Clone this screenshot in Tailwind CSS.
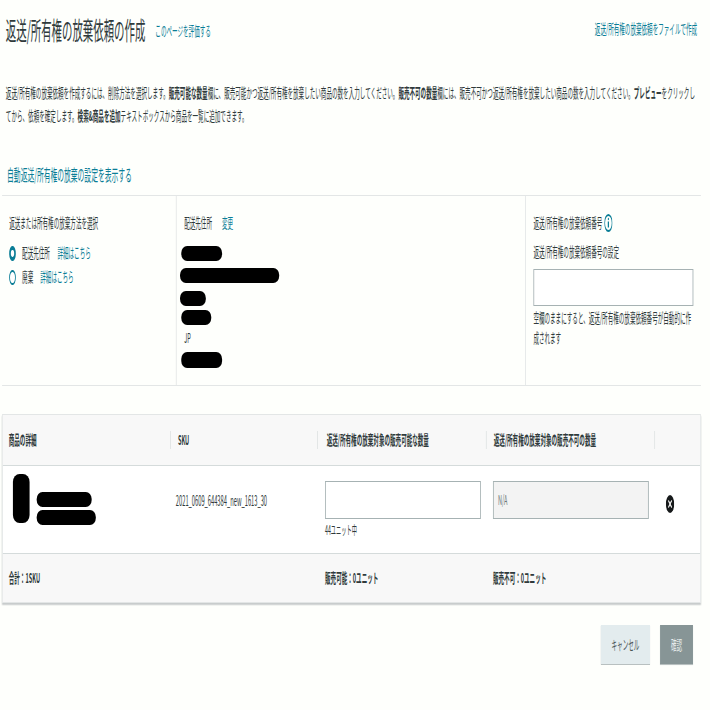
<!DOCTYPE html>
<html lang="ja">
<head>
<meta charset="utf-8">
<title>返送/所有権の放棄依頼の作成</title>
<script src="https://cdn.jsdelivr.net/npm/@tailwindcss/browser@4"></script>
</head>
<body class="bg-[#fefffc]">
<div class="w-[710px] h-[710px] overflow-hidden">
    <!-- the whole page is squeezed horizontally in the reference -->
    <div class="w-[1704px] h-[710px] origin-top-left scale-x-[0.4167] text-[13.35px] leading-[20px] text-[#2f3a3b] font-['Noto_Sans_CJK_JP','Noto_Sans',sans-serif]">

        <div class="flex items-center h-[58px] pl-[14px] pr-[31px]">
            <h1 class="text-[25px] leading-[30px] font-normal">返送/所有権の放棄依頼の作成</h1>
            <a class="ml-[24px] mt-[4px] text-[#0a7d96]">このページを評価する</a>
            <a class="ml-auto text-[#0a7d96]">返送/所有権の放棄依頼をファイルで作成</a>
        </div>

        <p class="mt-[23px] pl-[14px] pr-[20px] leading-[23px]">
            返送/所有権の放棄依頼を作成するには、削除方法を選択します。<b>販売可能な数量</b>欄に、販売可能かつ返送/所有権を放棄したい商品の数を入力してください。<b>販売不可の数量</b>欄には、販売不可かつ返送/所有権を放棄したい商品の数を入力してください。<b>プレビュー</b>をクリックし<br>てから、依頼を確定します。<b>検索&amp;商品を追加</b>テキストボックスから商品を一覧に追加できます。
        </p>

        <a class="block mt-[35px] pl-[17px] text-[16.3px] leading-[24px] text-[#0a7d96]">自動返送/所有権の放棄の設定を表示する</a>

        <section class="ml-[5px] mt-[9px] w-[1677px] h-[191px] grid grid-cols-[417px_840px_420px] border-y border-[#e3e6e6]">
            <div class="pl-[17px] pt-[17px]">
                <div>返送または所有権の放棄方法を選択</div>
                <div class="flex items-center mt-[10px] h-[20px]">
                    <span class="w-[16px] h-[15px] rounded-full border-[4px] border-[#0a7d96] bg-white"></span>
                    <span class="ml-[15px]">配送先住所</span>
                    <a class="ml-[18px] text-[#0a7d96]">詳細はこちら</a>
                </div>
                <div class="flex items-center mt-[4px] h-[20px]">
                    <span class="w-[16px] h-[15px] rounded-full border-2 border-[#0a7d96] bg-white"></span>
                    <span class="ml-[15px]">廃棄</span>
                    <a class="ml-[17px] text-[#0a7d96]">詳細はこちら</a>
                </div>
            </div>

            <div class="border-x-2 border-[#e3e6e6] pl-[18px] pt-[17px]">
                <div class="flex">
                    <span>配送先住所</span>
                    <a class="ml-[24px] text-[#0a7d96]">変更</a>
                </div>
                <div class="mt-[13px] -ml-[7px] w-[98px] h-[15px] bg-black rounded-[14px/7px]"></div>
                <div class="mt-[7px] -ml-[10px] w-[238px] h-[15px] bg-black rounded-[14px/7px]"></div>
                <div class="mt-[8px] -ml-[10px] w-[62px] h-[15px] bg-black rounded-[14px/7px]"></div>
                <div class="mt-[4px] -ml-[7px] w-[72px] h-[15px] bg-black rounded-[14px/7px]"></div>
                <div class="mt-[3px] h-[20px]">JP</div>
                <div class="mt-[4px] -ml-[7px] w-[98px] h-[16px] bg-black rounded-[14px/7px]"></div>
            </div>

            <div class="pl-[18px] pt-[17px]">
                <div class="flex items-center">
                    <span>返送/所有権の放棄依頼番号</span>
                    <svg class="ml-[5px] w-[20px] h-[18px]" viewBox="0 0 20 18" fill="none">
                        <ellipse cx="10" cy="9" rx="9" ry="8" stroke="#0a7d96" stroke-width="2"/>
                        <circle cx="10" cy="5" r="1.3" fill="#0a7d96"/>
                        <rect x="8.5" y="7.5" width="3" height="6" fill="#0a7d96"/>
                    </svg>
                </div>
                <div class="mt-[9px]">返送/所有権の放棄依頼番号の設定</div>
                <input class="block mt-[7px] w-[384px] h-[37px] bg-white border border-x-2 border-[#a6b2b3]" type="text">
                <p class="mt-[2px] w-[386px]">空欄のままにすると、返送/所有権の放棄依頼番号が自動的に作成されます</p>
            </div>
        </section>

        <section class="ml-[5px] mt-[28px] w-[1677px] bg-white border border-x-2 border-[#e3e6e6] shadow-[0_2px_2px_#c8cccc]">
            <div class="grid grid-cols-[401px_353px_405px_404px_1fr] items-center h-[51px] bg-[#f8f8f8] border-b border-[#d5dbdb] font-bold">
                <div class="pl-[14px]">商品の詳細</div>
                <div class="pl-[17px] h-[18px] flex items-center border-l-2 border-[#dfe3e3]">SKU</div>
                <div class="pl-[21px] h-[18px] flex items-center border-l-2 border-[#dfe3e3]">返送/所有権の放棄対象の販売可能な数量</div>
                <div class="pl-[17px] h-[18px] flex items-center border-l-2 border-[#dfe3e3]">返送/所有権の放棄対象の販売不可の数量</div>
                <div class="h-[18px] border-l-2 border-[#dfe3e3]"></div>
            </div>

            <div class="grid grid-cols-[401px_353px_405px_404px_1fr] h-[88px] border-b border-[#d5dbdb]">
                <div class="flex pl-[24px] pt-[8px]">
                    <div class="w-[40px] h-[49px] bg-black rounded-[16px/8px]"></div>
                    <div class="ml-[17px] pt-[18px]">
                        <div class="w-[132px] h-[15px] bg-black rounded-[14px/7px]"></div>
                        <div class="mt-[3px] w-[142px] h-[15px] bg-black rounded-[14px/7px]"></div>
                    </div>
                </div>
                <div class="pl-[14px] pt-[24px] text-[13.8px]">2021_0609_644384_new_1613_30</div>
                <div class="pl-[19px] pt-[15px]">
                    <input class="block w-[374px] h-[38px] bg-white border border-x-2 border-[#a6b2b3]" type="text">
                    <div class="mt-[1px] text-[12.5px] leading-[20px]">44ユニット中</div>
                </div>
                <div class="pl-[17px] pt-[15px]">
                    <div class="flex items-center w-[374px] h-[38px] pl-[10px] bg-[#f3f3f3] border border-x-2 border-[#a6b2b3] text-[#6c7778]">N/A</div>
                </div>
                <div class="pl-[28px] pt-[29px]">
                    <svg class="w-[20px] h-[18px]" viewBox="0 0 20 18">
                        <ellipse cx="10" cy="9" rx="10" ry="9" fill="#16191a"/>
                        <path d="M6 5.5 L14 12.5 M14 5.5 L6 12.5" stroke="#fff" stroke-width="2"/>
                    </svg>
                </div>
            </div>

            <div class="grid grid-cols-[754px_405px_1fr] items-center h-[48px] bg-[#f8f8f8] font-bold">
                <div class="pl-[14px]">合計：1SKU</div>
                <div class="pl-[19px]">販売可能：0ユニット</div>
                <div class="pl-[17px]">販売不可：0ユニット</div>
            </div>
        </section>

        <div class="flex justify-end gap-[24px] mt-[22px] pr-[41px]">
            <button class="w-[118px] h-[39px] bg-[#e3ecee] text-[#4a5556] shadow-[0_1px_1px_#b8c0c0]">キャンセル</button>
            <button class="w-[79px] h-[39px] bg-[#879596] text-[#e8eded] shadow-[0_1px_1px_#b8c0c0]">確認</button>
        </div>
    </div>
</div>
</body>
</html>
